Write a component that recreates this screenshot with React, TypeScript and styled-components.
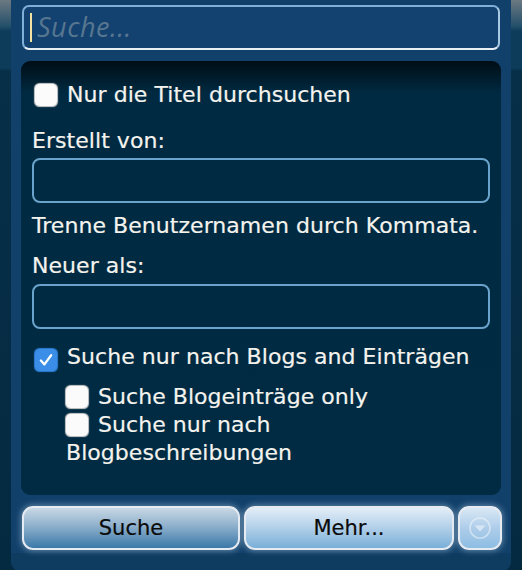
import styled, { createGlobalStyle } from "styled-components";

const GlobalStyle = createGlobalStyle`
  html, body {
    margin: 0;
    padding: 0;
  }
  body {
    width: 522px;
    height: 570px;
    overflow: hidden;
    font-family: "DejaVu Sans", Verdana, sans-serif;
    background: linear-gradient(
      to bottom,
      #6c7982 0px,
      #24506a 26px,
      #0d3c5a 31px,
      #0d3c5a 68px,
      #072f48 71px,
      #032a40 100%
    );
  }
`;

const Panel = styled.div`
  width: 500px;
  margin-left: 11px;
  box-sizing: border-box;
  padding: 5px 10px 21px;
  border-radius: 0 0 9px 9px;
  background: linear-gradient(
    to bottom,
    #11416b 0,
    #11416b calc(100% - 18px),
    #0e3b60 calc(100% - 18px)
  );
`;

const SearchWrap = styled.div`
  position: relative;
  margin: 0 1px;
`;

const SearchInput = styled.input`
  display: block;
  width: 100%;
  height: 45px;
  box-sizing: border-box;
  padding: 0 0 3px 13px;
  border: 2px solid;
  border-color: #7fb0d8 #a9c8e2 #e9eff4 #7fb0d8;
  border-radius: 7px;
  background: #134271;
  color: #ffffff;
  font-family: "Open Sans", "DejaVu Sans", sans-serif;
  font-style: italic;
  font-size: 27px;
  letter-spacing: 0.5px;
  outline: none;
  &::placeholder {
    color: #57768f;
  }
`;

const Caret = styled.span`
  position: absolute;
  left: 8px;
  top: 8px;
  width: 2px;
  height: 29px;
  background: #f3e3a2;
`;

const Box = styled.div`
  margin-top: 11px;
  padding: 20px 11px 28px;
  border-radius: 9px;
  background: linear-gradient(to bottom, #000d15 0, #002a41 32px, #002b42 100%);
  color: #f4f3ee;
  font-size: 22px;
  letter-spacing: 0.05px;
  line-height: 28px;
  -webkit-text-stroke: 0.2px #f4f3ee;
`;

const Row = styled.label<{ $indent?: boolean; $gap?: number }>`
  display: block;
  padding-left: ${({ $indent }) => ($indent ? "34px" : "3px")};
  margin-bottom: ${({ $gap }) => $gap ?? 0}px;
`;

const Check = styled.span<{ $checked?: boolean }>`
  display: inline-flex;
  align-items: center;
  justify-content: center;
  width: 22px;
  height: 22px;
  margin-right: 10px;
  vertical-align: -4px;
  border-radius: 5px;
  background: ${({ $checked }) => ($checked ? "#3a8ee8" : "#fbfbfb")};
  box-shadow: 0 0 1px 0.5px ${({ $checked }) => ($checked ? "#2f7fd6" : "#cfcfcf")};
`;

const Label = styled.div<{ $gap?: number }>`
  margin-bottom: ${({ $gap }) => $gap ?? 0}px;
`;

const Field = styled.input`
  display: block;
  width: 100%;
  height: 45px;
  box-sizing: border-box;
  border: 2px solid #6aa3cb;
  border-radius: 8px;
  background: transparent;
  outline: none;
`;

const Buttons = styled.div`
  display: flex;
  margin-top: 11px;
  padding-left: 1px;
  gap: 2px;
`;

const Button = styled.button<{ $tone: "dark" | "light" | "icon"; $w: number }>`
  width: ${({ $w }) => $w}px;
  height: 44px;
  flex: none;
  padding: 0;
  border: 2px solid #e6ebf2;
  border-radius: 11px;
  box-shadow: 0 0 6px 1px rgba(200, 220, 240, 0.45);
  font-family: "DejaVu Sans", Verdana, sans-serif;
  font-size: 21px;
  -webkit-text-stroke: 0.2px #0b0b0b;
  color: #0b0b0b;
  display: flex;
  align-items: center;
  justify-content: center;
  background: ${({ $tone }) =>
    $tone === "dark"
      ? "linear-gradient(to bottom, #c8d8e5 0%, #8eb0cc 45%, #3b79a9 100%)"
      : $tone === "light"
      ? "linear-gradient(to bottom, #e2edf7 0%, #b6d2ea 45%, #79afd8 100%)"
      : "linear-gradient(to bottom, #d9e8f4 0%, #aecdea 50%, #8dbde2 100%)"};
  & + & {
    margin-left: ${({ $tone }) => ($tone === "icon" ? "2px" : "0")};
  }
`;

const CheckMark = () => (
  <svg width="16" height="16" viewBox="0 0 14 14">
    <path d="M2.5 7.5 L5.6 10.8 L11.5 2.8" fill="none" stroke="#fff" strokeWidth="2" strokeLinecap="round" strokeLinejoin="round" />
  </svg>
);

const DownCircle = () => (
  <svg width="24" height="24" viewBox="0 0 24 24">
    <circle cx="12" cy="12" r="10" fill="none" stroke="rgba(255,255,255,0.45)" strokeWidth="1.6" />
    <path d="M6.5 9.5 H17.5 L12 15.5 Z" fill="rgba(255,255,255,0.5)" />
  </svg>
);

export default function App() {
  return (
    <>
      <GlobalStyle />
      <Panel>
        <SearchWrap>
          <SearchInput placeholder="Suche..." />
          <Caret />
        </SearchWrap>
        <Box>
          <Row $gap={18}>
            <Check />
            Nur die Titel durchsuchen
          </Row>
          <Label $gap={3}>Erstellt von:</Label>
          <Field />
          <Label style={{ marginTop: 9 }} $gap={12}>
            Trenne Benutzernamen durch Kommata.
          </Label>
          <Label $gap={4}>Neuer als:</Label>
          <Field />
          <Row style={{ marginTop: 14 }} $gap={12}>
            <Check $checked>
              <CheckMark />
            </Check>
            Suche nur nach Blogs and Einträgen
          </Row>
          <Row $indent>
            <Check />
            Suche Blogeinträge only
          </Row>
          <Row $indent>
            <Check />
            Suche nur nach Blogbeschreibungen
          </Row>
        </Box>
        <Buttons>
          <Button $tone="dark" $w={218}>Suche</Button>
          <Button $tone="light" $w={210}>Mehr...</Button>
          <Button $tone="icon" $w={44}>
            <DownCircle />
          </Button>
        </Buttons>
      </Panel>
    </>
  );
}
